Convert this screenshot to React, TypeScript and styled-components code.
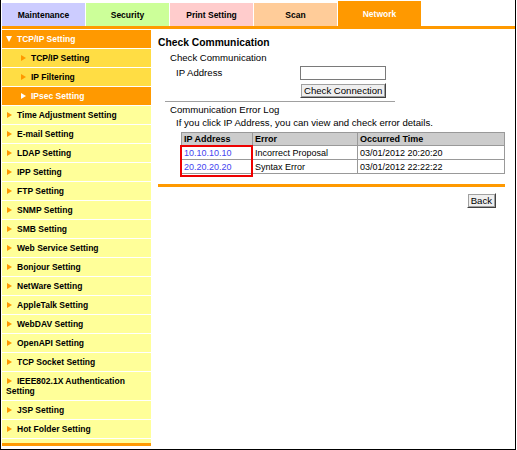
import React from "react";
import styled, { createGlobalStyle } from "styled-components";

const GlobalStyle = createGlobalStyle`
  html, body {
    margin: 0;
    padding: 0;
    background: #ffffff;
  }
  body {
    font-family: "Liberation Sans", Arial, sans-serif;
    font-size: 9.6px;
    color: #000;
  }
`;

const tabs = [
  { label: "Maintenance", bg: "#ccccff" },
  { label: "Security", bg: "#ccff99" },
  { label: "Print Setting", bg: "#ffcccc" },
  { label: "Scan", bg: "#ffcc99" },
  { label: "Network", bg: "#ff9900", active: true },
];

type MenuItem = { label: string; kind: "head" | "sub" | "subActive" | "item" };

const menu: MenuItem[] = [
  { label: "TCP/IP Setting", kind: "head" },
  { label: "TCP/IP Setting", kind: "sub" },
  { label: "IP Filtering", kind: "sub" },
  { label: "IPsec Setting", kind: "subActive" },
  { label: "Time Adjustment Setting", kind: "item" },
  { label: "E-mail Setting", kind: "item" },
  { label: "LDAP Setting", kind: "item" },
  { label: "IPP Setting", kind: "item" },
  { label: "FTP Setting", kind: "item" },
  { label: "SNMP Setting", kind: "item" },
  { label: "SMB Setting", kind: "item" },
  { label: "Web Service Setting", kind: "item" },
  { label: "Bonjour Setting", kind: "item" },
  { label: "NetWare Setting", kind: "item" },
  { label: "AppleTalk Setting", kind: "item" },
  { label: "WebDAV Setting", kind: "item" },
  { label: "OpenAPI Setting", kind: "item" },
  { label: "TCP Socket Setting", kind: "item" },
  { label: "IEEE802.1X Authentication Setting", kind: "item" },
  { label: "JSP Setting", kind: "item" },
  { label: "Hot Folder Setting", kind: "item" },
];

const logRows = [
  { ip: "10.10.10.10", error: "Incorrect Proposal", time: "03/01/2012 20:20:20" },
  { ip: "20.20.20.20", error: "Syntax Error", time: "03/01/2012 22:22:22" },
];

const Frame = styled.div`
  width: 516px;
  height: 450px;
  box-sizing: border-box;
  border: 1px solid #000;
  border-top: none;
  padding: 1px 0 0 1px;
  overflow: hidden;
`;

const TabBar = styled.div`
  display: flex;
  align-items: flex-end;
  gap: 1px;
  height: 25px;
`;

const Tab = styled.div<{ $bg: string; $active?: boolean }>`
  width: 83px;
  height: ${({ $active }) => ($active ? "25px" : "23px")};
  background: ${({ $bg }) => $bg};
  color: ${({ $active }) => ($active ? "#fff" : "#000")};
  font-weight: bold;
  font-size: 8.5px;
  display: flex;
  align-items: center;
  justify-content: center;
`;

const OrangeBar = styled.div`
  height: 3px;
  background: #ff9900;
`;

const Body = styled.div`
  display: flex;
  align-items: flex-start;
  margin-top: 1px;
`;

const Sidebar = styled.nav`
  width: 149px;
  flex: none;
  border-bottom: 3px solid #ff9900;
  background: #ffff99;
  padding-bottom: 4px;
`;

const menuBg = {
  head: "#ff9900",
  sub: "#ffdd44",
  subActive: "#ff9900",
  item: "#ffff99",
};

const MenuRow = styled.div<{ $kind: MenuItem["kind"] }>`
  background: ${({ $kind }) => menuBg[$kind]};
  color: ${({ $kind }) => ($kind === "head" || $kind === "subActive" ? "#fff" : "#000")};
  font-weight: bold;
  font-size: 8.5px;
  line-height: 10px;
  padding: 4px 4px 4px ${({ $kind }) => ($kind === "sub" || $kind === "subActive" ? "18px" : "4px")};
  border-bottom: 1px solid #fff;
`;

const Arrow = styled.span<{ $kind: MenuItem["kind"] }>`
  display: inline-block;
  width: 0;
  height: 0;
  vertical-align: 0;
  ${({ $kind }) =>
    $kind === "head"
      ? `border-left: 3px solid transparent; border-right: 3px solid transparent; border-top: 6px solid #fff; margin: 0 5px 0 0;`
      : `border-top: 3.5px solid transparent; border-bottom: 3.5px solid transparent; border-left: 5px solid ${
          $kind === "subActive" ? "#fff" : "#ff9900"
        }; margin: 0 5px 0 1px;`}
`;

const Main = styled.main`
  flex: 1;
  padding: 6px 10px 0 7px;
`;

const Title = styled.h1`
  font-size: 10.3px;
  font-weight: bold;
  margin: 0;
  line-height: 13px;
`;

const Section = styled.div`
  padding-left: 12px;
`;

const Label = styled.div`
  line-height: 12px;
`;

const FirstLabel = styled(Label)`
  margin-top: 3px;
`;

const FormGrid = styled.div`
  display: grid;
  grid-template-columns: 124px auto;
  grid-template-rows: 14px 15px;
  row-gap: 3px;
  padding-left: 6px;
  margin-top: 2px;
  align-items: center;
`;

const TextInput = styled.input`
  width: 86px;
  height: 14px;
  box-sizing: border-box;
  border: 1px solid #7a7a7a;
  padding: 0;
  margin: 0;
`;

const Button = styled.button`
  font-family: "Liberation Sans", Arial, sans-serif;
  font-size: 9.6px;
  height: 15px;
  padding: 0 3px;
  line-height: 12px;
  background: #efefef;
  border: 1px solid;
  border-color: #fff #404040 #404040 #fff;
  outline: 1px solid #a0a0a0;
  outline-offset: -2px;
  color: #000;
  justify-self: start;
`;

const Divider = styled.hr`
  border: none;
  border-top: 1px solid #a0a0a0;
  margin: 3px 0 2px 7px;
  width: 230px;
`;

const Note = styled.div`
  padding-left: 6px;
  line-height: 13px;
  margin-bottom: 3px;
`;

const TableWrap = styled.div`
  position: relative;
  margin-left: 11px;
  width: 324px;
`;

const LogTable = styled.table`
  border-collapse: collapse;
  width: 100%;
  font-size: 9px;
  th,
  td {
    border: 1px solid #999;
    padding: 0 2px;
    height: 13px;
    line-height: 12px;
    text-align: left;
    white-space: nowrap;
  }
  th {
    background: #cccccc;
    font-weight: bold;
    height: 12px;
  }
`;

const IpLink = styled.a`
  color: #4444f0;
  text-decoration: none;
`;

const Highlight = styled.div`
  position: absolute;
  left: -1px;
  top: 13px;
  width: 73px;
  height: 32px;
  border: 2px solid #ee0000;
  box-sizing: border-box;
`;

const Footer = styled.div`
  margin-top: 10px;
  border-top: 3px solid #ff9900;
  display: flex;
  justify-content: flex-end;
  padding: 6px 9px 0 0;
`;

export default function App() {
  return (
    <>
      <GlobalStyle />
      <Frame>
        <TabBar>
          {tabs.map((t) => (
            <Tab key={t.label} $bg={t.bg} $active={t.active}>
              {t.label}
            </Tab>
          ))}
        </TabBar>
        <OrangeBar />
        <Body>
          <Sidebar>
            {menu.map((m, i) => (
              <MenuRow key={i} $kind={m.kind}>
                <Arrow $kind={m.kind} />
                {m.label}
              </MenuRow>
            ))}
          </Sidebar>
          <Main>
            <Title>Check Communication</Title>
            <Section>
              <FirstLabel>Check Communication</FirstLabel>
              <FormGrid>
                <Label>IP Address</Label>
                <TextInput type="text" />
                <span />
                <Button>Check Connection</Button>
              </FormGrid>
            </Section>
            <Divider />
            <Section>
              <Label>Communication Error Log</Label>
              <Note>If you click IP Address, you can view and check error details.</Note>
              <TableWrap>
                <LogTable>
                  <thead>
                    <tr>
                      <th style={{ width: 66 }}>IP Address</th>
                      <th style={{ width: 100 }}>Error</th>
                      <th>Occurred Time</th>
                    </tr>
                  </thead>
                  <tbody>
                    {logRows.map((r) => (
                      <tr key={r.ip}>
                        <td>
                          <IpLink href="#">{r.ip}</IpLink>
                        </td>
                        <td>{r.error}</td>
                        <td>{r.time}</td>
                      </tr>
                    ))}
                  </tbody>
                </LogTable>
                <Highlight />
              </TableWrap>
            </Section>
            <Footer>
              <Button>Back</Button>
            </Footer>
          </Main>
        </Body>
      </Frame>
    </>
  );
}
